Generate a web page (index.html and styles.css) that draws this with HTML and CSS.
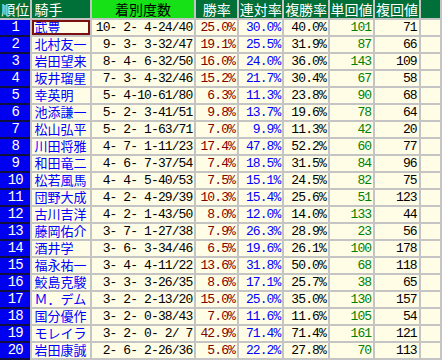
FILE: index.html
```html
<!DOCTYPE html>
<html lang="ja">
<head>
<meta charset="utf-8">
<link rel="stylesheet" href="styles.css">
</head>
<body>
<table class="stats">
<thead>
<tr>
<th class="h-dark c-rank">順位</th>
<th class="h-dark c-name left">騎手</th>
<th class="h-lime c-rec">着別度数</th>
<th class="h-dark c-pct">勝率</th>
<th class="h-dark c-pct">連対率</th>
<th class="h-dark c-pct">複勝率</th>
<th class="h-dark c-pct">単回値</th>
<th class="h-dark c-pct">複回値</th>
<th class="h-dark c-extra"></th>
</tr>
</thead>
<tbody>
<tr><td class="rank">1</td><td class="name sel">武豊</td><td class="num">10- 2- 4-24/40</td><td class="num win">25.0%</td><td class="num ren">30.0%</td><td class="num">40.0%</td><td class="num tan">101</td><td class="num">71</td><td class="extra"></td></tr>
<tr><td class="rank">2</td><td class="name">北村友一</td><td class="num"> 9- 3- 3-32/47</td><td class="num win">19.1%</td><td class="num ren">25.5%</td><td class="num">31.9%</td><td class="num tan">87</td><td class="num">66</td><td class="extra"></td></tr>
<tr><td class="rank">3</td><td class="name">岩田望来</td><td class="num"> 8- 4- 6-32/50</td><td class="num win">16.0%</td><td class="num ren">24.0%</td><td class="num">36.0%</td><td class="num tan">143</td><td class="num">109</td><td class="extra"></td></tr>
<tr><td class="rank">4</td><td class="name">坂井瑠星</td><td class="num"> 7- 3- 4-32/46</td><td class="num win">15.2%</td><td class="num ren">21.7%</td><td class="num">30.4%</td><td class="num tan">67</td><td class="num">58</td><td class="extra"></td></tr>
<tr><td class="rank">5</td><td class="name">幸英明</td><td class="num"> 5- 4-10-61/80</td><td class="num win">6.3%</td><td class="num ren">11.3%</td><td class="num">23.8%</td><td class="num tan">90</td><td class="num">68</td><td class="extra"></td></tr>
<tr><td class="rank">6</td><td class="name">池添謙一</td><td class="num"> 5- 2- 3-41/51</td><td class="num win">9.8%</td><td class="num ren">13.7%</td><td class="num">19.6%</td><td class="num tan">78</td><td class="num">64</td><td class="extra"></td></tr>
<tr><td class="rank">7</td><td class="name">松山弘平</td><td class="num"> 5- 2- 1-63/71</td><td class="num win">7.0%</td><td class="num ren">9.9%</td><td class="num">11.3%</td><td class="num tan">42</td><td class="num">20</td><td class="extra"></td></tr>
<tr><td class="rank">8</td><td class="name">川田将雅</td><td class="num"> 4- 7- 1-11/23</td><td class="num win">17.4%</td><td class="num ren">47.8%</td><td class="num">52.2%</td><td class="num tan">60</td><td class="num">77</td><td class="extra"></td></tr>
<tr><td class="rank">9</td><td class="name">和田竜二</td><td class="num"> 4- 6- 7-37/54</td><td class="num win">7.4%</td><td class="num ren">18.5%</td><td class="num">31.5%</td><td class="num tan">84</td><td class="num">96</td><td class="extra"></td></tr>
<tr><td class="rank">10</td><td class="name">松若風馬</td><td class="num"> 4- 4- 5-40/53</td><td class="num win">7.5%</td><td class="num ren">15.1%</td><td class="num">24.5%</td><td class="num tan">82</td><td class="num">75</td><td class="extra"></td></tr>
<tr><td class="rank">11</td><td class="name">団野大成</td><td class="num"> 4- 2- 4-29/39</td><td class="num win">10.3%</td><td class="num ren">15.4%</td><td class="num">25.6%</td><td class="num tan">51</td><td class="num">123</td><td class="extra"></td></tr>
<tr><td class="rank">12</td><td class="name">古川吉洋</td><td class="num"> 4- 2- 1-43/50</td><td class="num win">8.0%</td><td class="num ren">12.0%</td><td class="num">14.0%</td><td class="num tan">133</td><td class="num">44</td><td class="extra"></td></tr>
<tr><td class="rank">13</td><td class="name">藤岡佑介</td><td class="num"> 3- 7- 1-27/38</td><td class="num win">7.9%</td><td class="num ren">26.3%</td><td class="num">28.9%</td><td class="num tan">23</td><td class="num">56</td><td class="extra"></td></tr>
<tr><td class="rank">14</td><td class="name">酒井学</td><td class="num"> 3- 6- 3-34/46</td><td class="num win">6.5%</td><td class="num ren">19.6%</td><td class="num">26.1%</td><td class="num tan">100</td><td class="num">178</td><td class="extra"></td></tr>
<tr><td class="rank">15</td><td class="name">福永祐一</td><td class="num"> 3- 4- 4-11/22</td><td class="num win">13.6%</td><td class="num ren">31.8%</td><td class="num">50.0%</td><td class="num tan">68</td><td class="num">118</td><td class="extra"></td></tr>
<tr><td class="rank">16</td><td class="name">鮫島克駿</td><td class="num"> 3- 3- 3-26/35</td><td class="num win">8.6%</td><td class="num ren">17.1%</td><td class="num">25.7%</td><td class="num tan">38</td><td class="num">65</td><td class="extra"></td></tr>
<tr><td class="rank">17</td><td class="name">Ｍ．デム</td><td class="num"> 3- 2- 2-13/20</td><td class="num win">15.0%</td><td class="num ren">25.0%</td><td class="num">35.0%</td><td class="num tan">130</td><td class="num">157</td><td class="extra"></td></tr>
<tr><td class="rank">18</td><td class="name">国分優作</td><td class="num"> 3- 2- 0-38/43</td><td class="num win">7.0%</td><td class="num ren">11.6%</td><td class="num">11.6%</td><td class="num tan">105</td><td class="num">54</td><td class="extra"></td></tr>
<tr><td class="rank">19</td><td class="name foreign">モレイラ</td><td class="num"> 3- 2- 0- 2/ 7</td><td class="num win">42.9%</td><td class="num ren">71.4%</td><td class="num">71.4%</td><td class="num tan">161</td><td class="num">121</td><td class="extra"></td></tr>
<tr><td class="rank">20</td><td class="name">岩田康誠</td><td class="num"> 2- 6- 2-26/36</td><td class="num win">5.6%</td><td class="num ren">22.2%</td><td class="num">27.8%</td><td class="num tan">70</td><td class="num">113</td><td class="extra"></td></tr>
</tbody>
</table>
</body>
</html>
```
FILE: styles.css
```css
html, body {
  margin: 0;
  padding: 0;
  background: #ffffff;
  overflow: hidden;
}

.stats {
  border-collapse: separate;
  border-spacing: 2px;
  margin: -2px 0 0 -2px;
  background: #c4c4c4;
  table-layout: fixed;
  font-family: "Noto Sans CJK JP", sans-serif;
  font-size: 13px;
}

.stats th,
.stats td {
  padding: 0;
  height: 15px;
  line-height: 15px;
  white-space: pre;
  vertical-align: middle;
}

.stats th {
  height: 18px;
  line-height: 18px;
  font-weight: normal;
  text-align: center;
  font-size: 14px;
}

.h-dark {
  background: #007038;
  color: #ffffff;
}

.h-lime {
  background: #16e016;
  color: #000000;
}

.left {
  text-align: left !important;
  padding-left: 2px !important;
}

.c-rank { width: 33px; }
.c-name { width: 59px; }
.c-rec { width: 107px; }
.c-pct { width: 45px; }
.c-extra { width: 40px; }

.rank {
  background: #0000f0;
  color: #ffffff;
  text-align: center;
  font-family: "Liberation Mono", monospace;
  font-size: 14px;
  letter-spacing: -1px;
  box-shadow: 0 2px 0 #101040;
}

.stats td.name {
  background: #fffde6;
  color: #0000ff;
  padding: 0 0 2px 2px;
  height: 13px;
  line-height: 13px;
  font-size: 13px;
}

.name.sel {
  outline: 2px solid #7a1010;
  outline-offset: -2px;
}

.name.foreign {
  color: #ff0000;
}

.num {
  background: #fffde6;
  color: #000000;
  text-align: right;
  padding-right: 2px !important;
  font-family: "Liberation Mono", monospace;
  font-size: 13px;
  letter-spacing: -0.9px;
}

.num.win { color: #800000; }
.num.ren { color: #0000ff; }
.num.tan { color: #008000; }

.extra {
  background: #fffde6;
}
```
